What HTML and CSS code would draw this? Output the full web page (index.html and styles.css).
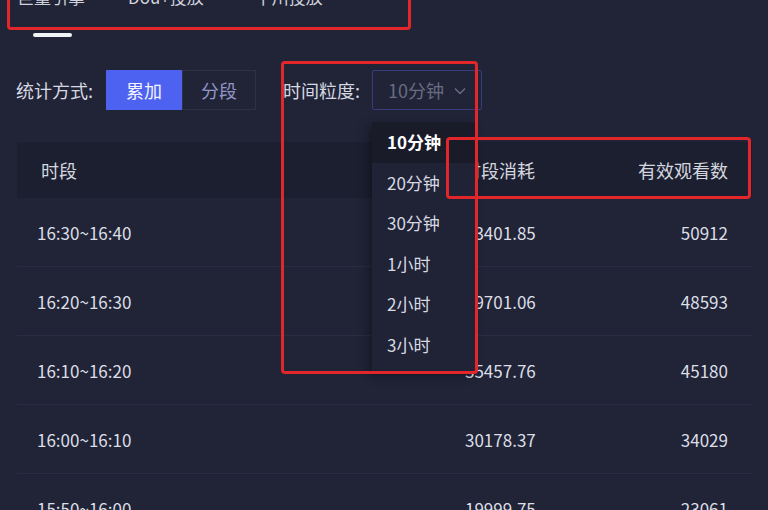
FILE: index.html
```html
<!DOCTYPE html>
<html lang="zh-CN">
<head>
<meta charset="utf-8">
<link rel="stylesheet" href="styles.css">
</head>
<body>
<div class="page">
  <nav class="tabs">
    <div class="tab tab-active">巨量引擎</div>
    <div class="tab">Dou+投放</div>
    <div class="tab">千川投放</div>
  </nav>

  <div class="toolbar">
    <span class="label">统计方式:</span>
    <div class="seg">
      <button class="seg-btn seg-on">累加</button>
      <button class="seg-btn">分段</button>
    </div>
    <span class="label label-gap">时间粒度:</span>
    <div class="select">
      <span>10分钟</span>
      <svg class="chev" width="12" height="8" viewBox="0 0 12 8"><path d="M1 1.5 L6 6.5 L11 1.5" fill="none" stroke="#6a6f84" stroke-width="1.3"/></svg>
    </div>
  </div>

  <div class="table">
    <div class="row head">
      <div class="c1">时段</div><div class="c2">时段消耗</div><div class="c3">有效观看数</div>
    </div>
    <div class="row"><div class="c1">16:30~16:40</div><div class="c2">43401.85</div><div class="c3">50912</div></div>
    <div class="row"><div class="c1">16:20~16:30</div><div class="c2">39701.06</div><div class="c3">48593</div></div>
    <div class="row"><div class="c1">16:10~16:20</div><div class="c2">35457.76</div><div class="c3">45180</div></div>
    <div class="row"><div class="c1">16:00~16:10</div><div class="c2">30178.37</div><div class="c3">34029</div></div>
    <div class="row"><div class="c1">15:50~16:00</div><div class="c2">19999.75</div><div class="c3">23061</div></div>
  </div>

  <ul class="dropdown">
    <li class="opt opt-on">10分钟</li>
    <li class="opt">20分钟</li>
    <li class="opt">30分钟</li>
    <li class="opt">1小时</li>
    <li class="opt">2小时</li>
    <li class="opt">3小时</li>
  </ul>

  <div class="mark mark-tabs"></div>
  <div class="mark mark-drop"></div>
  <div class="mark mark-head"></div>
</div>
</body>
</html>
```

FILE: styles.css
```css
* { box-sizing: border-box; }
html, body {
  margin: 0;
  padding: 0;
  background: #212437;
  height: 100%;
  overflow: hidden;
}
body {
  font-family: "Noto Sans CJK SC", "Noto Sans", sans-serif;
  color: #d9dbe4;
  font-size: 17px;
}
.page {
  position: relative;
  width: 768px;
  height: 510px;
  overflow: hidden;
}
.tabs {
  display: flex;
  height: 38px;
  margin-top: -14px;
  padding-left: 17px;
  align-items: flex-start;
}
.tab {
  font-size: 17px;
  line-height: 22px;
  color: #d0d2dc;
  position: relative;
  margin-right: 43px;
}
.tab:nth-child(2) { margin-right: 51px; }
.tab-active::after {
  content: "";
  position: absolute;
  left: 16px;
  width: 39px;
  top: 47px;
  height: 4px;
  border-radius: 2px;
  background: #f2f3f7;
}
.toolbar {
  display: flex;
  align-items: center;
  height: 40px;
  margin-top: 46px;
  padding-left: 16px;
}
.label {
  font-size: 18px;
  color: #d7d9e2;
  margin-right: 13px;
}
.label-gap { margin-left: 27px; margin-right: 12px; }
.seg {
  display: flex;
  height: 40px;
}
.seg-btn {
  font-family: inherit;
  font-size: 18px;
  border: 1px solid #2e3144;
  background: transparent;
  color: #9196c9;
  width: 74px;
  height: 40px;
  padding: 0;
}
.seg-on {
  width: 76px;
  background: #4e62f2;
  border-color: #4e62f2;
  color: #f2f3fb;
}
.select {
  display: flex;
  align-items: center;
  justify-content: space-between;
  width: 110px;
  height: 40px;
  border: 1px solid #363d7c;
  border-radius: 2px;
  padding: 0 15px 0 15px;
  color: #686d82;
  font-size: 18px;
}
.chev { margin-top: 2px; }
.table {
  margin: 32px 16px 0 17px;
}
.row {
  display: grid;
  grid-template-columns: 424px 1fr 1fr;
  height: 69px;
  align-items: center;
  border-bottom: 1px solid #2a2d41;
  font-size: 17px;
  color: #dcdee6;
}
.row.head {
  height: 56px;
  background: #1c1f30;
  border-bottom: none;
  font-size: 18px;
  color: #d4d6df;
}
.c1 { padding-left: 24px; }
.row:not(.head) .c1 { padding-left: 20px; }
.c2 { padding-left: 24px; }
.row.head .c2 { padding-left: 22px; }
.c3 { text-align: right; padding-right: 24px; }
.dropdown {
  position: absolute;
  left: 372px;
  top: 122px;
  width: 104px;
  margin: 0;
  padding: 0 0 6px 0;
  list-style: none;
  background: #202336;
  box-shadow: -4px 4px 10px rgba(0,0,0,0.35);
}
.opt {
  height: 40.6px;
  line-height: 40.6px;
  padding-left: 15px;
  font-size: 17px;
  color: #d7d9e2;
}
.opt-on {
  background: #191b29;
  color: #ffffff;
  font-weight: 700;
}
.mark {
  position: absolute;
  border: 3px solid #e3262a;
  border-radius: 4px;
}
.mark-tabs { left: 7px; top: -10px; width: 404px; height: 40px; }
.mark-drop { left: 281px; top: 61px; width: 197px; height: 313px; }
.mark-head { left: 446px; top: 137px; width: 305px; height: 62px; }
```
